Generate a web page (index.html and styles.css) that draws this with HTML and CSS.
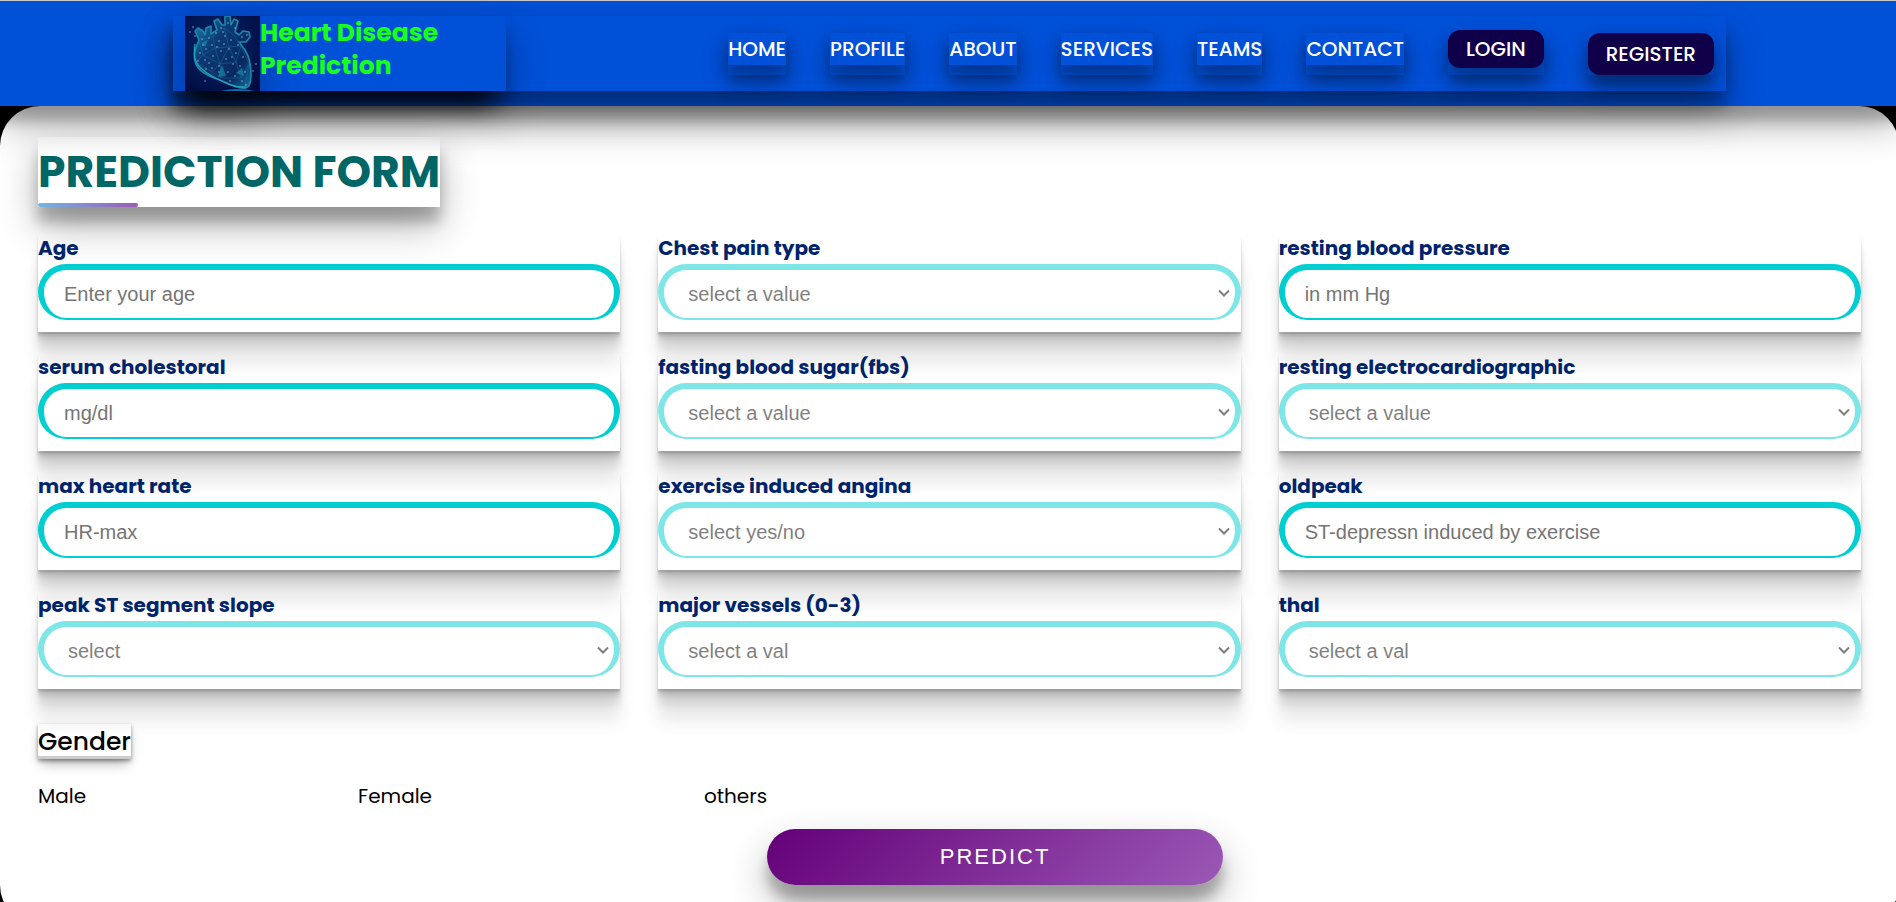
FILE: index.html
```html
<!DOCTYPE html>
<html lang="en">
<head>
<meta charset="utf-8">
<title>Heart Disease Prediction</title>
<link rel="stylesheet" href="styles.css">
</head>
<body>
<header class="header">
  <div class="header-inner">
    <a class="brand" href="#">
      <svg class="brand-image" viewBox="0 0 75 75" aria-hidden="true">
        <defs>
          <radialGradient id="night" cx="45%" cy="40%" r="75%">
            <stop offset="0" stop-color="#04307c"/>
            <stop offset="0.5" stop-color="#021a58"/>
            <stop offset="1" stop-color="#010a3c"/>
          </radialGradient>
          <linearGradient id="tissue" x1="0" y1="0" x2="1" y2="1">
            <stop offset="0" stop-color="#1c88b4"/>
            <stop offset="0.35" stop-color="#0c3a74"/>
            <stop offset="0.75" stop-color="#082860"/>
            <stop offset="1" stop-color="#15739c"/>
          </linearGradient>
        </defs>
        <rect width="75" height="75" fill="url(#night)"/>
        <path fill="url(#tissue)" stroke="#1f87aa" stroke-width="1.6" stroke-linejoin="round" d="M14 24 L10 15 L13 12 L18 15 L20 19 L21 12 L26 10 L26 18 L32 14 L29 5 L33 3 L37 9 L40 9 L40 0 L45 0 L46 9 L49 3 L53 5 L50 16 L54 19 L58 15 L64 16 L65 21 L61 26 L54 26 L60 34 C65 42 66 51 66 59 C66 66 65 71 61 72 C52 73 44 68 35 64 C23 60 12 55 10 45 C8 37 11 32 14 24 Z"/>
        <path fill="none" stroke="#1b6f9d" stroke-width="0.5" d="M14 25 L28 20 L39 12 L49 19 L56 30 L64 48 L60 70 M14 25 L18 39 L30 32 L28 20 M18 39 L11 46 L27 56 L35 48 L30 32 L44 31 L39 12 M44 31 L56 30 L51 46 L44 31 L35 48 L51 46 L56 62 L37 62 L35 48 M56 62 L64 48 M27 56 L37 62 M18 39 L35 48"/>
        <path fill="#138aa9" opacity="0.7" d="M33 61 L37 49 L41 60 Z M51 57 L57 52 L59 60 Z M16 27 L23 24 L20 31 Z"/>
        <path d="M10 28 C8 42 9 50 27 60 S50 71 61 71" fill="none" stroke="#25a5c0" stroke-width="1.2"/>
        <path d="M36 75 Q52 71 70 75 Z" fill="#0a6ca8"/>
        <path stroke="#a9cdf2" stroke-width="1.3" stroke-linecap="round" d="M5 16h0M8 11h0M10 20h0M17 23h0M24 22h0M31 17h0M36 12h0M43 7h0M50 12h0M57 21h0M62 19h0M40 20h0M46 24h0M53 29h0M34 25h0M27 29h0M21 33h0M15 37h0M13 45h0M20 44h0M28 40h0M36 35h0M44 33h0M51 37h0M58 41h0M41 43h0M48 48h0M55 50h0M60 56h0M34 50h0M27 52h0M21 53h0M34 56h0M43 56h0M50 60h0M57 65h0M61 69h0M45 65h0M71 48h0M68 55h0M20 65h0M32 31h0M39 28h0M47 41h0M24 47h0M38 16h0M18 29h0"/>
      </svg>
      <span class="brand-name">Heart Disease Prediction</span>
    </a>
    <nav>
      <ul class="menu">
        <li class="menu-item"><a class="menu-link" href="#">HOME</a></li>
        <li class="menu-item"><a class="menu-link" href="#">PROFILE</a></li>
        <li class="menu-item"><a class="menu-link" href="#">ABOUT</a></li>
        <li class="menu-item"><a class="menu-link" href="#">SERVICES</a></li>
        <li class="menu-item"><a class="menu-link" href="#">TEAMS</a></li>
        <li class="menu-item"><a class="menu-link" href="#">CONTACT</a></li>
        <li class="menu-item"><a class="menu-link pill pill-login" href="#">LOGIN</a></li>
        <li class="menu-item"><a class="menu-link pill" href="#">REGISTER</a></li>
      </ul>
    </nav>
  </div>
</header>
<main class="panel">
  <h1 class="title">PREDICTION FORM</h1>
  <form>
    <div class="fields">
      <div class="field"><label class="label" for="age">Age</label><input class="control" id="age" type="text" placeholder="Enter your age"></div>
      <div class="field"><label class="label" for="cp">Chest pain type</label><select class="control select" id="cp"><option>select a value</option></select></div>
      <div class="field"><label class="label" for="bp">resting blood pressure</label><input class="control" id="bp" type="text" placeholder="in mm Hg"></div>
      <div class="field"><label class="label" for="chol">serum cholestoral</label><input class="control" id="chol" type="text" placeholder="mg/dl"></div>
      <div class="field"><label class="label" for="fbs">fasting blood sugar(fbs)</label><select class="control select" id="fbs"><option>select a value</option></select></div>
      <div class="field"><label class="label" for="ecg">resting electrocardiographic</label><select class="control select" id="ecg"><option>select a value</option></select></div>
      <div class="field"><label class="label" for="hr">max heart rate</label><input class="control" id="hr" type="text" placeholder="HR-max"></div>
      <div class="field"><label class="label" for="angina">exercise induced angina</label><select class="control select" id="angina"><option>select yes/no</option></select></div>
      <div class="field"><label class="label" for="oldpeak">oldpeak</label><input class="control" id="oldpeak" type="text" placeholder="ST-depressn induced by exercise"></div>
      <div class="field"><label class="label" for="slope">peak ST segment slope</label><select class="control select" id="slope"><option>select</option></select></div>
      <div class="field"><label class="label" for="vessels">major vessels (0-3)</label><select class="control select" id="vessels"><option>select a val</option></select></div>
      <div class="field"><label class="label" for="thal">thal</label><select class="control select" id="thal"><option>select a val</option></select></div>
    </div>
    <fieldset class="gender">
      <legend class="gender-title">Gender</legend>
      <div class="gender-options">
        <label><input class="gender-radio" type="radio" name="gender">Male</label>
        <label><input class="gender-radio" type="radio" name="gender">Female</label>
        <label><input class="gender-radio" type="radio" name="gender">others</label>
      </div>
    </fieldset>
    <button class="predict" type="submit">PREDICT</button>
  </form>
</main>
</body>
</html>
```
FILE: styles.css
```css
* { box-sizing: border-box; margin: 0; padding: 0; }

:root {
  --lift: 0 19px 38px rgba(0, 0, 0, 0.3), 0 15px 12px rgba(0, 0, 0, 0.22);
}

html { overflow: hidden; background: #000; }

body {
  width: calc(100% + 3px);
  background: #000;
  color: #000;
  font-family: Poppins, Inter, sans-serif;
  font-size: 20px;
}

.header {
  position: relative;
  z-index: 1;
  padding: 15px 173px;
  border-top: 1px solid #c8c8c8;
  background: #0050d8;
  box-shadow: var(--lift);
}

.header-inner {
  display: flex;
  justify-content: space-between;
  align-items: center;
  padding-right: 12px;
  box-shadow: var(--lift);
}

.brand {
  display: flex;
  width: 333px;
  padding-left: 12px;
  color: #1aff1a;
  font-size: 25px;
  font-weight: 700;
  line-height: 33px;
  text-decoration: none;
  box-shadow: var(--lift), 0 28px 22px -16px rgba(0, 0, 0, 0.75);
}

.brand-image {
  flex: none;
  width: 75px;
  height: 75px;
  box-shadow: 0 19px 38px rgba(0, 0, 0, 0.3);
}

.brand-name { width: 200px; }

.menu { display: flex; gap: 44px; list-style: none; }

.menu-item { height: 42px; box-shadow: 0 8px 18px rgba(0, 0, 0, 0.24); }

.menu-link {
  display: block;
  color: #fff;
  font-weight: 500;
  line-height: 32px;
  text-decoration: none;
  box-shadow: 0 14px 28px rgba(0, 0, 0, 0.22), 0 12px 10px rgba(0, 0, 0, 0.15);
}

.pill {
  padding: 5px 18px;
  border-radius: 12px;
  background: #0f0049;
}

.pill-login { padding: 3px 18px; margin-top: -3px; }

.panel {
  padding: 31px 38px 40px;
  border-radius: 40px;
  background: #fff;
}

.title {
  width: fit-content;
  margin-bottom: 27px;
  padding-top: 4px;
  color: #006666;
  font-size: 44px;
  font-weight: 700;
  line-height: 62px;
  box-shadow: var(--lift);
}

.title::after {
  content: "";
  display: block;
  width: 100px;
  height: 4px;
  border-radius: 2px;
  background: linear-gradient(135deg, #71b7e6, #9b59b6);
}

.fields {
  display: grid;
  grid-template-columns: repeat(3, 1fr);
  gap: 21px 38px;
}

.field {
  padding-bottom: 12px;
  box-shadow: 0 2px 1px rgba(0, 0, 0, 0.09), 0 4px 2px rgba(0, 0, 0, 0.09),
    0 8px 4px rgba(0, 0, 0, 0.09), 0 16px 8px rgba(0, 0, 0, 0.09),
    0 32px 16px rgba(0, 0, 0, 0.09);
}

.label {
  display: block;
  margin-bottom: 2px;
  color: #00246b;
  font-weight: 700;
  line-height: 28px;
}

.control {
  display: block;
  width: 100%;
  height: 56px;
  padding: 0 20px;
  border: 6px solid #00ced1;
  border-bottom-width: 2px;
  border-radius: 35px;
  background: #fff;
  font-family: Arial, "Liberation Sans", sans-serif;
  font-size: 20px;
}

.control::placeholder { color: #757575; }

.select {
  appearance: none;
  padding: 0 24px;
  background: #fff url("data:image/svg+xml,%3Csvg xmlns='http://www.w3.org/2000/svg' width='12' height='9'%3E%3Cpath d='M1 1.5l5 5 5-5' fill='none' stroke='%23000' stroke-width='2'/%3E%3C/svg%3E") no-repeat right 5px top 19px;
  color: #000;
  opacity: 0.5;
}

.gender { border: 0; margin-top: 35px; }

.gender-title {
  font-size: 25px;
  font-weight: 500;
  line-height: 35px;
  box-shadow: 0 2px 4px rgba(0, 0, 0, 0.4), 0 7px 13px -3px rgba(0, 0, 0, 0.3),
    inset 0 -3px 0 rgba(0, 0, 0, 0.2);
}

.gender-options {
  display: flex;
  justify-content: space-between;
  width: 40%;
  margin-top: 22px;
  line-height: 30px;
}

.gender-radio { display: none; }

.predict {
  display: block;
  width: 25%;
  height: 56px;
  margin: 18px 0 0 40%;
  border: 0;
  border-radius: 28px;
  background: linear-gradient(135deg, #640078, #9b59b6);
  color: #fff;
  font-family: Arial, "Liberation Sans", sans-serif;
  font-size: 22px;
  letter-spacing: 2px;
  box-shadow: var(--lift);
}
```
